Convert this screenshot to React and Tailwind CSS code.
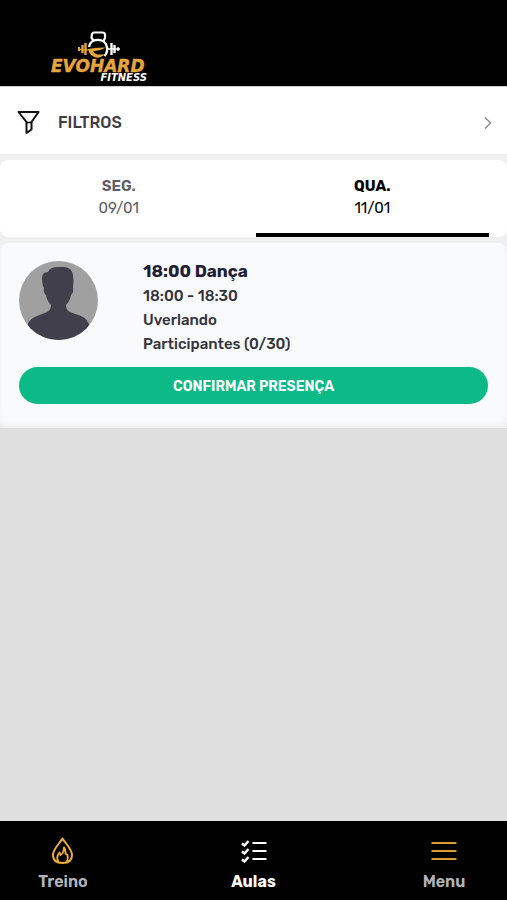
import React, { useState } from 'react';
import clsx from 'clsx';

const days = [
  { id: 'seg', label: 'SEG.', date: '09/01' },
  { id: 'qua', label: 'QUA.', date: '11/01' },
];

const classes = [
  {
    id: 1,
    title: '18:00 Dança',
    time: '18:00 - 18:30',
    teacher: 'Uverlando',
    participants: 'Participantes (0/30)',
  },
];

const App = () => {
  const [day, setDay] = useState('qua');

  return (
    <div className="flex min-h-screen flex-col bg-[#dfdfdf] font-['Rubik','Roboto',sans-serif]">
      <header className="flex h-[86px] items-end bg-black px-12 pb-1">
        <Logo />
      </header>

      <main className="flex-1">
        <div className="flex flex-col gap-[6px] bg-[#efefef]">
          <button
            type="button"
            className="flex h-[68px] w-full items-center border-t border-[#d4d4d4] bg-white pt-1 pr-3 pl-4 text-[#3d3d42]"
          >
            <FunnelIcon />
            <span className="ml-[17px] flex-1 text-left text-base leading-6 font-medium">FILTROS</span>
            <ChevronIcon />
          </button>

          <div
            className="grid h-[77px] grid-cols-2 gap-5 rounded-lg bg-white pr-[18px] pl-0.5"
            role="tablist"
          >
            {days.map((d) => (
              <DayTab key={d.id} day={d} active={day === d.id} onSelect={() => setDay(d.id)} />
            ))}
          </div>

          {classes.map((c) => (
            <ClassCard key={c.id} item={c} />
          ))}
        </div>
      </main>

      {/* Bottom navigation */}
      <nav className="flex h-[79px] justify-between bg-black px-[23px] pt-4 text-[#b4b4b8]">
        <NavItem label="Treino" icon={<FlameIcon />} />
        <NavItem label="Aulas" icon={<ChecklistIcon />} active />
        <NavItem label="Menu" icon={<MenuIcon />} />
      </nav>
    </div>
  );
};

const DayTab = ({ day, active, onSelect }) => (
  <button
    type="button"
    role="tab"
    aria-selected={active}
    onClick={onSelect}
    className={clsx(
      'flex flex-col items-center border-b-4 pt-[15px] text-[15px] leading-[22px]',
      active ? 'border-black text-black' : 'border-transparent text-[#5c5c66]'
    )}
  >
    <span className={active ? 'font-bold' : 'font-semibold'}>{day.label}</span>
    <span>{day.date}</span>
  </button>
);

const ClassCard = ({ item }) => (
  <article className="rounded-lg bg-[#f9fafc] px-[19px] pt-4 pb-6 shadow-[inset_0_-4px_4px_#f1f1f2]">
    <div className="flex gap-[45px]">
      <Avatar />
      <div className="text-[15px] leading-6 font-medium text-[#33333d]">
        <h2 className="mb-px text-[17px] leading-6 font-bold text-[#211d35]">{item.title}</h2>
        <p>{item.time}</p>
        <p>{item.teacher}</p>
        <p>{item.participants}</p>
      </div>
    </div>
    <button
      type="button"
      className="mt-[11px] h-[37px] w-full rounded-full bg-[#0bba87] pt-0.5 text-[14px] font-semibold text-white"
    >
      CONFIRMAR PRESENÇA
    </button>
  </article>
);

const NavItem = ({ label, icon, active }) => (
  <a
    href="#"
    className={clsx(
      'flex w-20 flex-col items-center gap-[5px] text-base leading-6',
      active ? 'font-bold text-white' : 'font-semibold'
    )}
  >
    {icon}
    <span>{label}</span>
  </a>
);

const Logo = () => (
  <svg width="104" height="54" viewBox="0 0 104 54" role="img" aria-label="Evohard Fitness">
    {/* kettlebell */}
    <path
      d="M46 13 L43.500 10 L44 6 Q44.500 4.500 46 4.500 H54.500 Q56.500 4.500 57 6 V10 L55.500 13"
      fill="none"
      stroke="#fff"
      strokeWidth="2.200"
    />
    <path d="M41 19 C42 10 57 9 59 19 Q60 24 56.500 28" fill="none" stroke="#fff" strokeWidth="2.400" />
    <path d="M30 20 Q36 22.500 43 20.500 Q50 19.500 58 19.500 Q52 23 45 23.500 Q48 28 57 26 Q50 33 43 27 Q41 25 40.500 22.500 L30 22 Z" fill="#e5a63d" />
    {/* plates */}
    <path d="M37.500 15 V27 M34.500 17 V25" stroke="#e5a63d" strokeWidth="2.400" />
    <path d="M31 19 V23" stroke="#e5a63d" strokeWidth="2" />
    <path d="M63.500 15 V27 M66.500 17 V25" stroke="#fff" strokeWidth="2.400" />
    <path d="M70 19 V23 M60 21 H72" stroke="#fff" strokeWidth="1.500" />
    <text
      x="3"
      y="44"
      fill="#e5a63d"
      stroke="#e5a63d"
      strokeWidth="0.4"
      className="font-['DejaVu_Sans',sans-serif] text-[17px] font-bold italic"
    >
      EVOHARD
    </text>
    <text
      x="99"
      y="53"
      textAnchor="end"
      fill="#fff"
      className="font-['DejaVu_Sans',sans-serif] text-[10px] font-bold italic"
    >
      FITNESS
    </text>
  </svg>
);

const FunnelIcon = () => (
  <svg width="25" height="26" viewBox="0 0 25 26" fill="none" stroke="#111" strokeWidth="2" strokeLinejoin="round">
    <path d="M2.500 2 H22.500 L15.500 12 V19.500 L10.500 23 V12 Z" />
    <path d="M10.500 12.500 H15.500" strokeWidth="1.600" />
  </svg>
);

const ChevronIcon = () => (
  <svg width="14" height="14" viewBox="0 0 14 14" fill="none" stroke="#8c8c8c" strokeWidth="1.4">
    <path d="M4 1.500 L9.500 7 L4 12.500" />
  </svg>
);

const Avatar = () => (
  <svg className="mt-0.5 shrink-0" width="79" height="79" viewBox="0 0 79 79" aria-hidden="true">
    <clipPath id="avatar">
      <circle cx="39.5" cy="39.5" r="39.500" />
    </clipPath>
    <g clipPath="url(#avatar)">
      <rect width="79" height="79" fill="#a0a0a0" />
      <path
        d="M24 25 Q22 17 24 13 Q26 11 29 11 Q31 6 39 6 H46 Q53 7 54 14 Q55 20 54 26 Q55 31 52 34 Q51 40 47 44 Q47 49 51 51 L62 55 Q69 58 71 66 V79 H8 V65 Q10 58 18 55 L28 51 Q32 49 32 44 Q28 40 27 34 Q24 32 25 27 Z"
        fill="#403f4b"
      />
    </g>
  </svg>
);

const FlameIcon = () => (
  <svg width="28" height="28" viewBox="0 0 28 28" fill="none" stroke="#f0ad35" strokeWidth="2" strokeLinejoin="round">
    <path d="M13.500 1.500 C11 6 4 12 4 18 C4 23.500 8 26 13.500 26 C19 26 23 23.500 23 18 C23 12 16 6 13.500 1.500 Z" />
    <path d="M9.500 25 C7 21 8 18.500 10.500 15.500 L11.500 18 Q14.500 17 15 10.500 Q16.500 12 16.500 16.500 L18.500 18 Q19.500 22 17.500 25" strokeWidth="1.800" />
  </svg>
);

const ChecklistIcon = () => (
  <svg width="28" height="28" viewBox="0 0 28 28" fill="none" stroke="#fff">
    <path d="M12.500 6 H26.500 M12.500 14 H26.500 M12.500 22 H26.500" strokeWidth="2" />
    <path d="M2 6.500 L4.500 8.500 L8.500 4 M2 14.500 L4.500 16.500 L8.500 12 M2 22.500 L4.500 24.500 L8.500 20" strokeWidth="2.400" />
  </svg>
);

const MenuIcon = () => (
  <svg width="28" height="28" viewBox="0 0 28 28" fill="none" stroke="#d79c35" strokeWidth="2">
    <path d="M1.500 6 H26.500 M1.500 14 H26.500 M1.500 22 H26.500" />
  </svg>
);

export default App;
